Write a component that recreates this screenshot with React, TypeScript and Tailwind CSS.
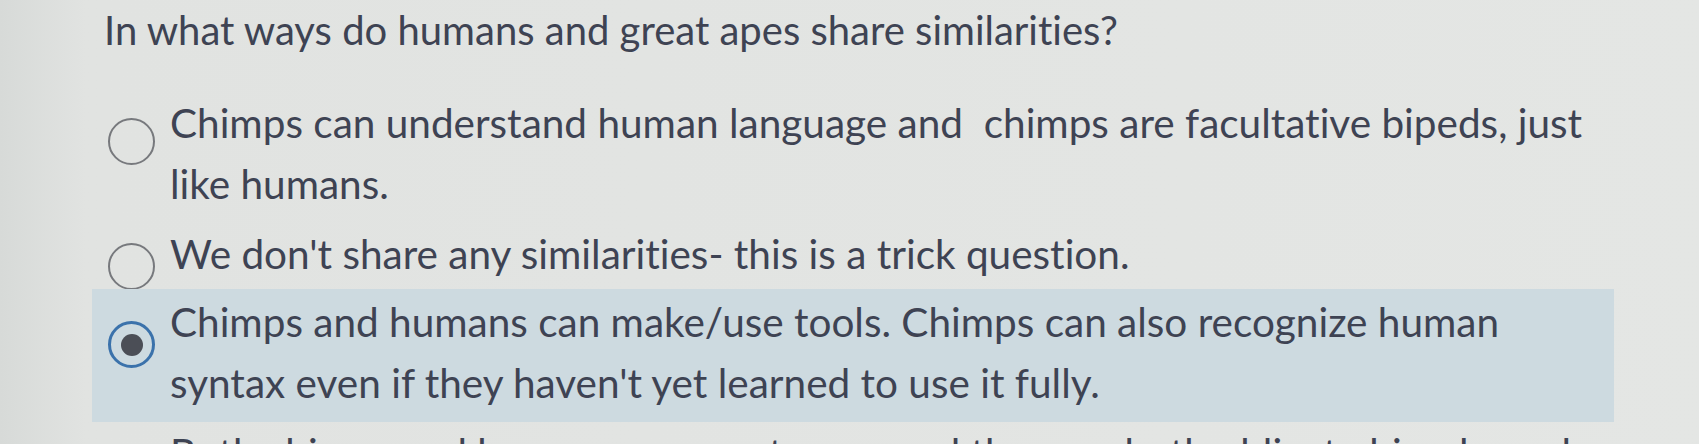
import { useState } from 'react'

type Option = {
  id: string
  text: string
  // the photo is slightly skewed, so each radio sits a little differently against its text
  radioTop: string
}

const OPTIONS: Option[] = [
  {
    id: 'a',
    text: 'Chimps can understand human language and\u00a0 chimps are facultative bipeds, just like humans.',
    radioTop: 'mt-[26px]',
  },
  {
    id: 'b',
    text: "We don't share any similarities- this is a trick question.",
    radioTop: 'mt-[20px]',
  },
  {
    id: 'c',
    text: "Chimps and humans can make/use tools. Chimps can also recognize human syntax even if they haven't yet learned to use it fully.",
    radioTop: 'mt-[30px]',
  },
  {
    id: 'd',
    text: 'Both chimps and humans are great apes, and they are both obligate bipeds, and they walk upright.',
    radioTop: 'mt-[26px]',
  },
]

function Radio({ checked }: { checked: boolean }) {
  if (checked) {
    return (
      <span className="flex h-[47px] w-[47px] shrink-0 items-center justify-center rounded-full border-[3px] border-[#3b72ab]">
        <span className="h-[22px] w-[22px] rounded-full bg-[#4b4e56]" />
      </span>
    )
  }
  return <span className="block h-[47px] w-[47px] shrink-0 rounded-full border-2 border-[#77797d]" />
}

export default function App() {
  const [selected, setSelected] = useState('c')

  return (
    <div className="h-[444px] overflow-hidden bg-linear-to-r from-[#d7dad8] via-[#e1e3e1] via-[5%] to-[#e4e6e4] pl-[92px] pr-[85px] pt-[6px] font-['Lato','Open_Sans',sans-serif] text-[#3e4353] [font-variant-ligatures:none]">
      <h1 className="pl-[12px] text-[40px] leading-[48px]">
        In what ways do humans and great apes share similarities?
      </h1>

      <div className="mt-[38px] flex flex-col">
        {OPTIONS.map((opt, i) => {
          const active = selected === opt.id
          const spacing = active
            ? 'relative -mt-[7px] bg-[#cddae0] pt-[2px] pb-[9px]'
            : i === 0
              ? 'pb-[9px]'
              : 'pb-[6px]'
          return (
            <label
              key={opt.id}
              onClick={() => setSelected(opt.id)}
              className={`flex cursor-pointer items-start pl-[16px] pr-[4px] ${spacing}`}
            >
              <span className={opt.radioTop}>
                <Radio checked={active} />
              </span>
              <span className="ml-[15px] text-[40.5px] leading-[61px]">{opt.text}</span>
            </label>
          )
        })}
      </div>
    </div>
  )
}
